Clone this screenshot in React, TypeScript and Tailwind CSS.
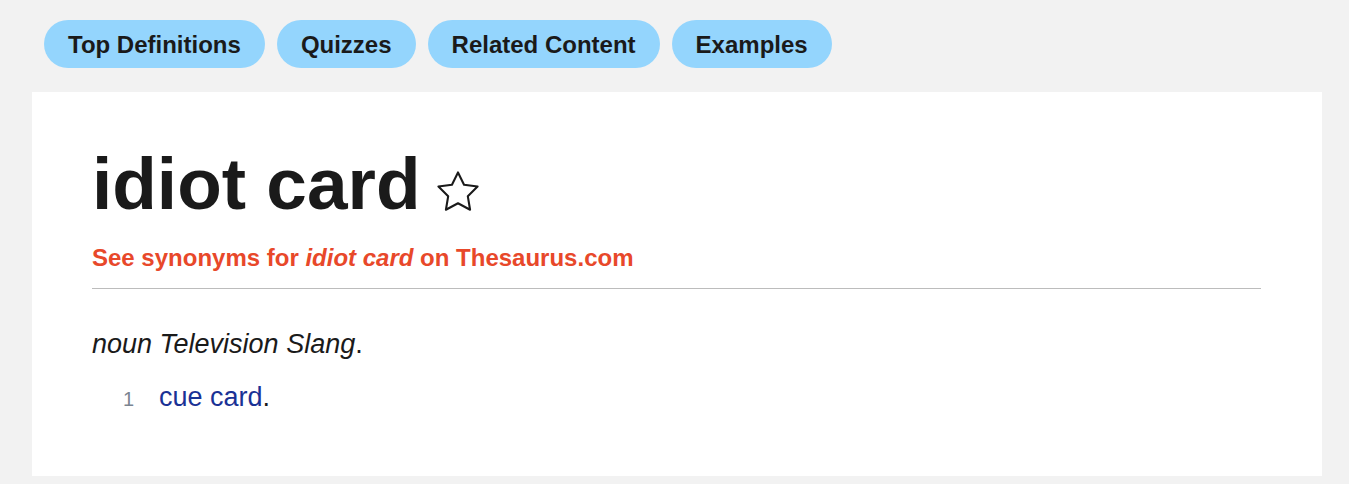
import React from "react";

const tabs = ["Top Definitions", "Quizzes", "Related Content", "Examples"];

function StarIcon() {
  return (
    <svg width="50" height="50" viewBox="0 0 24 24" fill="none" stroke="#1a1a1a" strokeWidth="1" strokeLinejoin="round">
      <path d="M12 2.6l2.9 5.9 6.5.9-4.7 4.6 1.1 6.5L12 17.4l-5.8 3.1 1.1-6.5-4.7-4.6 6.5-.9z" />
    </svg>
  );
}

export default function App() {
  return (
    <div className="min-h-[484px] bg-[#f2f2f2] pt-5 pb-2 [font-family:'Liberation_Sans',Arial,sans-serif]">
      <nav className="flex gap-3 pl-11">
        {tabs.map((t) => (
          <a
            key={t}
            href="#"
            className="flex h-12 items-center rounded-full bg-[#94d5fd] px-6 pt-px text-[24px] font-bold text-[#1a1a1a]"
          >
            {t}
          </a>
        ))}
      </nav>

      <section className="ml-8 mr-[27px] mt-6 h-[384px] bg-white pl-[60px] pr-[61px] pt-[50px]">
        <div className="flex items-center gap-3">
          <h1 className="text-[73px] leading-[84px] font-bold text-[#1a1a1a]">idiot card</h1>
          <span className="mt-4">
            <StarIcon />
          </span>
        </div>
        <a href="#" className="mt-[18px] block text-[24px] leading-[28px] font-bold text-[#e8482a]">
          See synonyms for <i>idiot card</i> on Thesaurus.com
        </a>
        <hr className="mt-[16px] border-t border-[#bcbcbc]" />

        <p className="mt-[39px] text-[27px] leading-[32px] text-[#1a1a1a]">
          <i>noun Television Slang</i>.
        </p>
        <ol className="mt-[21px]">
          <li className="flex items-baseline">
            <span className="w-[67px] pl-[31px] text-[20px] text-[#7b8591]">1</span>
            <span className="text-[27px] leading-[32px] text-[#1a1a1a]">
              <a href="#" className="text-[#1a3295]">cue card</a>.
            </span>
          </li>
        </ol>
      </section>
    </div>
  );
}
